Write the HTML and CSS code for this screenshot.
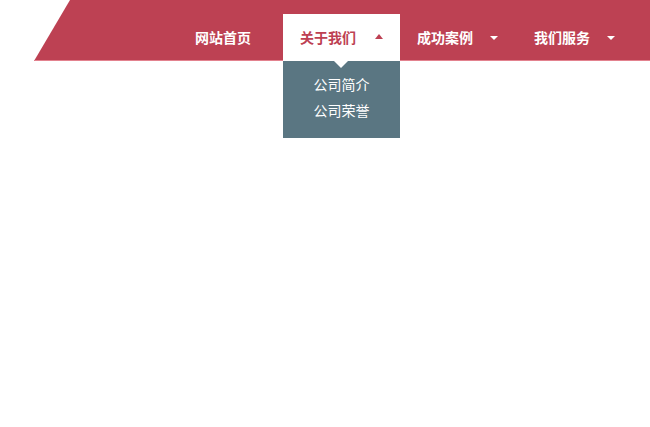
FILE: index.html
```html
<!DOCTYPE html>
<html lang="zh">
<head>
<meta charset="utf-8">
<link rel="stylesheet" href="styles.css">
</head>
<body>
<header class="header">
  <div class="bar"></div>
  <ul class="menu">
    <li class="item home"><span class="label">网站首页</span></li>
    <li class="item current">
      <div class="tab"><span class="label">关于我们</span><span class="caret up"></span></div>
      <div class="sub">
        <div class="sub-link">公司简介</div>
        <div class="sub-link">公司荣誉</div>
      </div>
    </li>
    <li class="item"><span class="label">成功案例</span><span class="caret"></span></li>
    <li class="item"><span class="label">我们服务</span><span class="caret"></span></li>
  </ul>
</header>
</body>
</html>
```
FILE: styles.css
```css
html, body { margin: 0; padding: 0; background: #fff; }
body { font-family: "Microsoft YaHei", "Noto Sans CJK SC", sans-serif; }
.header {
  position: relative;
}
.bar {
  position: absolute;
  left: 0; top: 0; right: 0; height: 61px;
  background: #bd4153;
  border-bottom: 1px solid #e3828f;
  box-sizing: border-box;
  clip-path: polygon(70px 0, 100% 0, 100% 100%, 34px 100%);
}
.menu {
  position: relative;
  list-style: none;
  margin: 0;
  padding: 14px 16px 0 0;
  display: flex;
  justify-content: flex-end;
  align-items: flex-start;
}
.item {
  width: 117px;
  box-sizing: border-box;
  padding: 0 0 0 17px;
  display: flex;
  align-items: center;
  height: 47px;
  color: #fff;
  font-size: 14px;
  font-weight: bold;
}
.item.home { width: 105px; }
.item.current {
  display: block;
  padding: 0;
  height: auto;
}
.tab {
  display: flex;
  align-items: center;
  height: 47px;
  padding-left: 17px;
  background: #fff;
  color: #bd4153;
}
.label { line-height: 20px; margin-top: -1px; }
.caret {
  width: 0; height: 0;
  margin-left: 17px;
  border-left: 4px solid transparent;
  border-right: 4px solid transparent;
  border-top: 4px solid #fff;
}
.caret.up {
  margin-left: 19px;
  border-top: 0;
  border-bottom: 5px solid #bd4153;
  margin-top: -2px;
}
.sub {
  position: relative;
  padding: 10px 0 15px;
  background: #5a7682;
  color: #fff;
  font-weight: normal;
  font-size: 14px;
  text-align: center;
}
.sub::before {
  content: "";
  position: absolute;
  top: 0; left: 51px;
  border-left: 7px solid transparent;
  border-right: 7px solid transparent;
  border-top: 7px solid #fff;
}
.sub-link { line-height: 26px; }
```
